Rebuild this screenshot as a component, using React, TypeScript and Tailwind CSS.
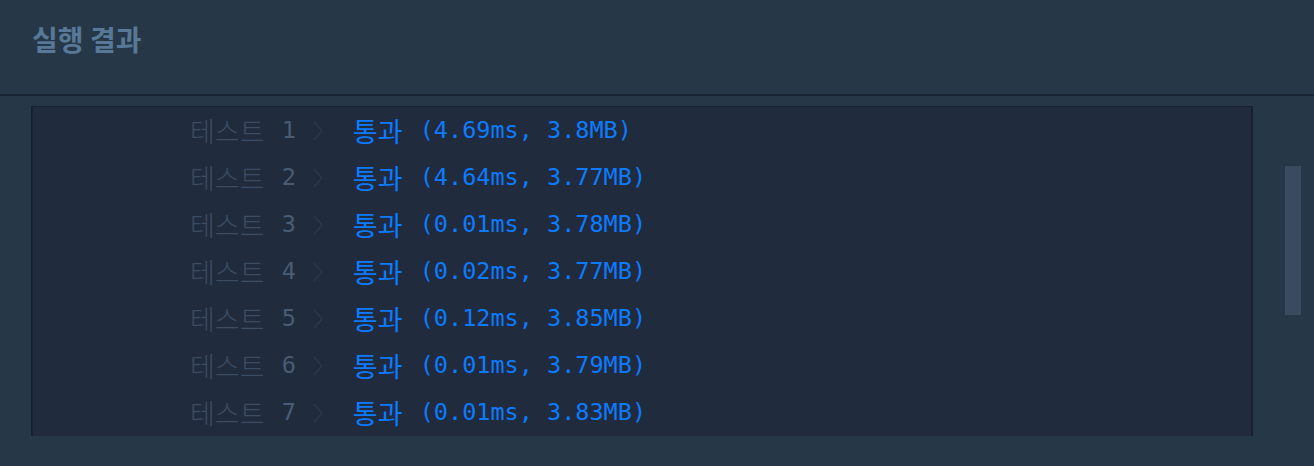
const results = [
  { id: 1, time: "4.69ms", mem: "3.8MB" },
  { id: 2, time: "4.64ms", mem: "3.77MB" },
  { id: 3, time: "0.01ms", mem: "3.78MB" },
  { id: 4, time: "0.02ms", mem: "3.77MB" },
  { id: 5, time: "0.12ms", mem: "3.85MB" },
  { id: 6, time: "0.01ms", mem: "3.79MB" },
  { id: 7, time: "0.01ms", mem: "3.83MB" },
];

const KO = "font-['Noto_Sans_CJK_KR',sans-serif]";
const MONO = "font-['DejaVu_Sans_Mono','Liberation_Mono',monospace]";

function Chevron() {
  return (
    <svg width="10" height="20" viewBox="0 0 10 20" className="ml-[17px] mr-[30px] shrink-0">
      <path d="M1 1 L9 10 L1 19" fill="none" stroke="#2b394c" strokeWidth="1.3" />
    </svg>
  );
}

function ResultRow({ id, time, mem }: { id: number; time: string; mem: string }) {
  return (
    <div className="flex h-[47px] items-center pl-[157px] whitespace-pre">
      <span className={`${KO} text-[27px] font-light leading-none text-[#3c4c62]`}>테스트</span>
      <span className={`${MONO} ml-[3px] text-[23.5px] leading-none text-[#4a5c73]`}> {id}</span>
      <Chevron />
      <span className={`${KO} text-[27px] leading-none text-[#0d7bff]`}>통과</span>
      <span className={`${MONO} ml-[3px] text-[23.5px] leading-none text-[#0d7bff]`}>
        {" "}({time}, {mem})
      </span>
    </div>
  );
}

export default function App() {
  return (
    <div className="h-[466px] w-[1314px] overflow-hidden bg-[#263747]">
      <div className="h-[96px] border-b-2 border-[#1a2433] pl-[32px] pt-[20px]">
        <h2 className={`${KO} text-[28px] font-bold leading-[38px] text-[#587898]`}>실행 결과</h2>
      </div>
      <div className="flex pt-[10px] pl-[31px]">
        <div className="h-[330px] w-[1222px] overflow-hidden border-x-2 border-t border-[#172130] bg-[#202b3d]">
          {results.map((r) => (
            <ResultRow key={r.id} {...r} />
          ))}
        </div>
        <div className="ml-[32px] pt-[60px]">
          <div className="h-[149px] w-[16px] bg-[#3a4b60]" />
        </div>
      </div>
    </div>
  );
}
